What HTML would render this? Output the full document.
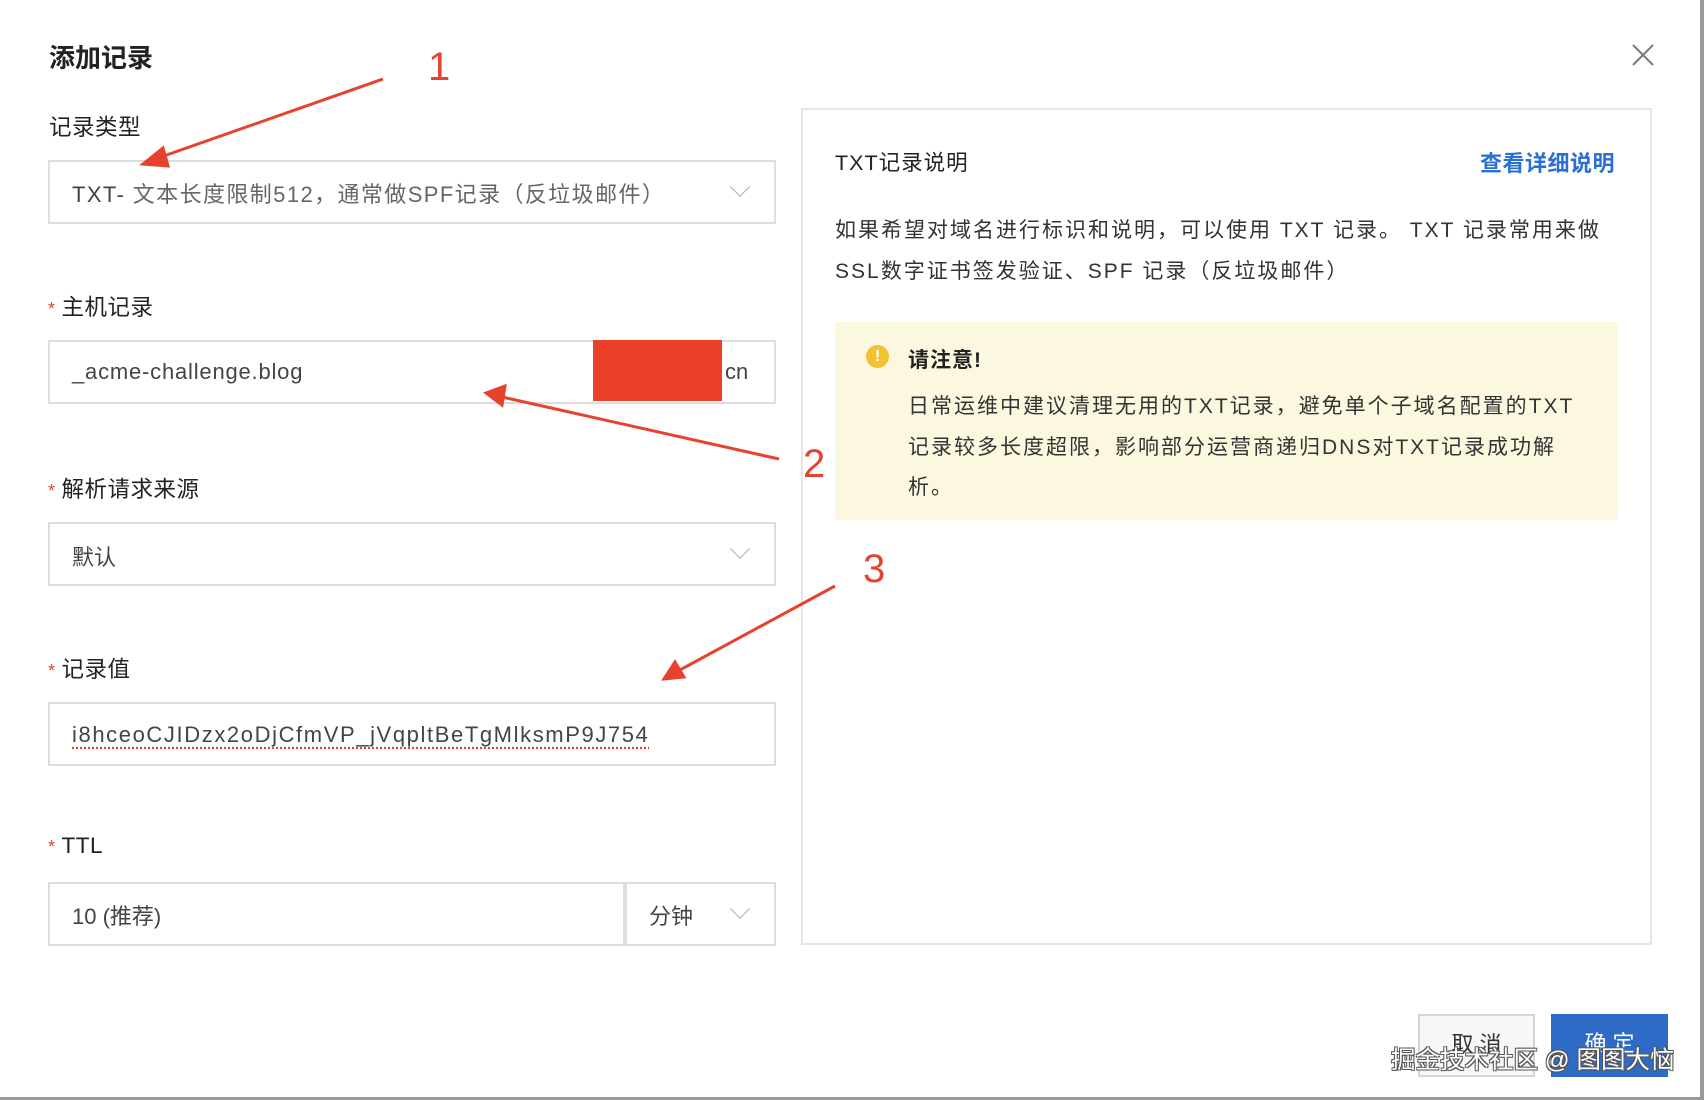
<!DOCTYPE html>
<html><head><meta charset="utf-8"><style>
*{margin:0;padding:0;box-sizing:border-box}
body{width:1704px;height:1100px;background:#fff;position:relative;overflow:hidden;font-family:"Liberation Sans","Noto Sans CJK SC",sans-serif;color:#333}
.a{position:absolute;white-space:nowrap}
.box{position:absolute;border:2px solid #ddd;background:#fff}
.lbl{font-size:22.5px;color:#222;letter-spacing:0.5px}
.st{color:#e5432e;font-size:18px;margin-right:6px}
.chev{position:absolute;width:14px;height:14px;border-right:1.5px solid #aaa;border-bottom:1.5px solid #aaa;transform:rotate(45deg)}
.t{font-size:22px;color:#444}
</style></head><body>
<div class="a" style="left:49px;top:38px;font-size:26px;font-weight:bold;color:#222">添加记录</div>
<svg class="a" style="left:1632px;top:44px" width="22" height="22"><path d="M1 1L21 21M21 1L1 21" stroke="#777" stroke-width="2"/></svg>

<div class="a lbl" style="left:49px;top:110px">记录类型</div>
<div class="box" style="left:48px;top:160px;width:728px;height:64px"></div>
<div class="a t" style="left:72px;top:177px;letter-spacing:1.4px"><span style="color:#444">TXT-</span> <span style="color:#666">文本长度限制512，通常做SPF记录（反垃圾邮件）</span></div>
<div class="chev" style="left:733px;top:180px"></div>

<div class="a lbl" style="left:48px;top:290px"><span class="st">*</span>主机记录</div>
<div class="box" style="left:48px;top:340px;width:728px;height:64px"></div>
<div class="a t" style="left:72px;top:359px;letter-spacing:0.8px">_acme-challenge.blog</div>
<div class="a" style="left:593px;top:340px;width:129px;height:61px;background:#e94027"></div>
<div class="a t" style="left:725px;top:359px">cn</div>

<div class="a lbl" style="left:48px;top:472px"><span class="st">*</span>解析请求来源</div>
<div class="box" style="left:48px;top:522px;width:728px;height:64px"></div>
<div class="a t" style="left:72px;top:540px">默认</div>
<div class="chev" style="left:733px;top:542px"></div>

<div class="a lbl" style="left:48px;top:652px"><span class="st">*</span>记录值</div>
<div class="box" style="left:48px;top:702px;width:728px;height:64px"></div>
<div class="a t" style="left:72px;top:722px;letter-spacing:1.6px;text-decoration:underline dotted #e5432e;text-underline-offset:5px">i8hceoCJIDzx2oDjCfmVP_jVqpltBeTgMlksmP9J754</div>

<div class="a lbl" style="left:48px;top:833px"><span class="st">*</span>TTL</div>
<div class="box" style="left:48px;top:882px;width:577px;height:64px"></div>
<div class="box" style="left:625px;top:882px;width:151px;height:64px"></div>
<div class="a t" style="left:72px;top:899px">10 (推荐)</div>
<div class="a t" style="left:649px;top:899px">分钟</div>
<div class="chev" style="left:733px;top:902px"></div>

<div class="box" style="left:801px;top:108px;width:851px;height:837px;border-color:#e6e6e6"></div>
<div class="a" style="left:835px;top:146px;font-size:21.5px;color:#222;letter-spacing:1px">TXT记录说明</div>
<div class="a" style="left:1480px;top:146px;font-size:22px;color:#2a6fd6;font-weight:bold;letter-spacing:0.5px">查看详细说明</div>
<div class="a" style="left:835px;top:210px;font-size:21px;color:#333;line-height:41px;letter-spacing:2px">如果希望对域名进行标识和说明，可以使用 TXT 记录。 TXT 记录常用来做<br>SSL数字证书签发验证、SPF 记录（反垃圾邮件）</div>
<div class="a" style="left:835px;top:322px;width:783px;height:198px;background:#fcf8e0"></div>
<div class="a" style="left:866px;top:345px;width:23px;height:23px;border-radius:50%;background:#f2c230;color:#fff;font-size:16px;font-weight:bold;text-align:center;line-height:23px">!</div>
<div class="a" style="left:908px;top:344px;font-size:21px;font-weight:bold;color:#222;letter-spacing:1px">请注意!</div>
<div class="a" style="left:908px;top:387px;font-size:21px;color:#333;line-height:40.5px;letter-spacing:2px">日常运维中建议清理无用的TXT记录，避免单个子域名配置的TXT<br>记录较多长度超限，影响部分运营商递归DNS对TXT记录成功解<br>析。</div>

<div class="a" style="left:1418px;top:1014px;width:117px;height:63px;border:2px solid #d5d5d5;background:#f7f7f7;font-size:22px;color:#333;text-align:center;line-height:58px">取 消</div>
<div class="a" style="left:1551px;top:1014px;width:117px;height:63px;background:#2d6bc6;font-size:22px;color:#fff;text-align:center;line-height:60px">确 定</div>
<div class="a" style="left:1391px;top:1041px;font-size:24.5px;color:#fff;text-shadow:1px 1px 0 #555,-1px -1px 0 #555,1px -1px 0 #555,-1px 1px 0 #555">掘金技术社区 @ 图图大恼</div>

<div class="a" style="left:1700px;top:0;width:4px;height:1100px;background:#9a9a9a"></div>
<div class="a" style="left:0;top:1097px;width:1704px;height:3px;background:#9a9a9a"></div>

<svg class="a" style="left:0;top:0" width="1704" height="1100">
<g stroke="#e5432e" stroke-width="3" fill="#e5432e">
<line x1="383" y1="79" x2="158" y2="158"/><polygon points="143,164 163,148 168,166"/>
<line x1="779" y1="459" x2="502" y2="397"/><polygon points="486,393 505,386 502,405"/>
<line x1="835" y1="586" x2="678" y2="671"/><polygon points="664,679 675,662 684,677"/>
</g>
<g fill="#e5432e" font-family="Liberation Sans" font-size="40">
<text x="428" y="80">1</text><text x="803" y="477">2</text><text x="863" y="582">3</text>
</g>
</svg>
</body></html>
